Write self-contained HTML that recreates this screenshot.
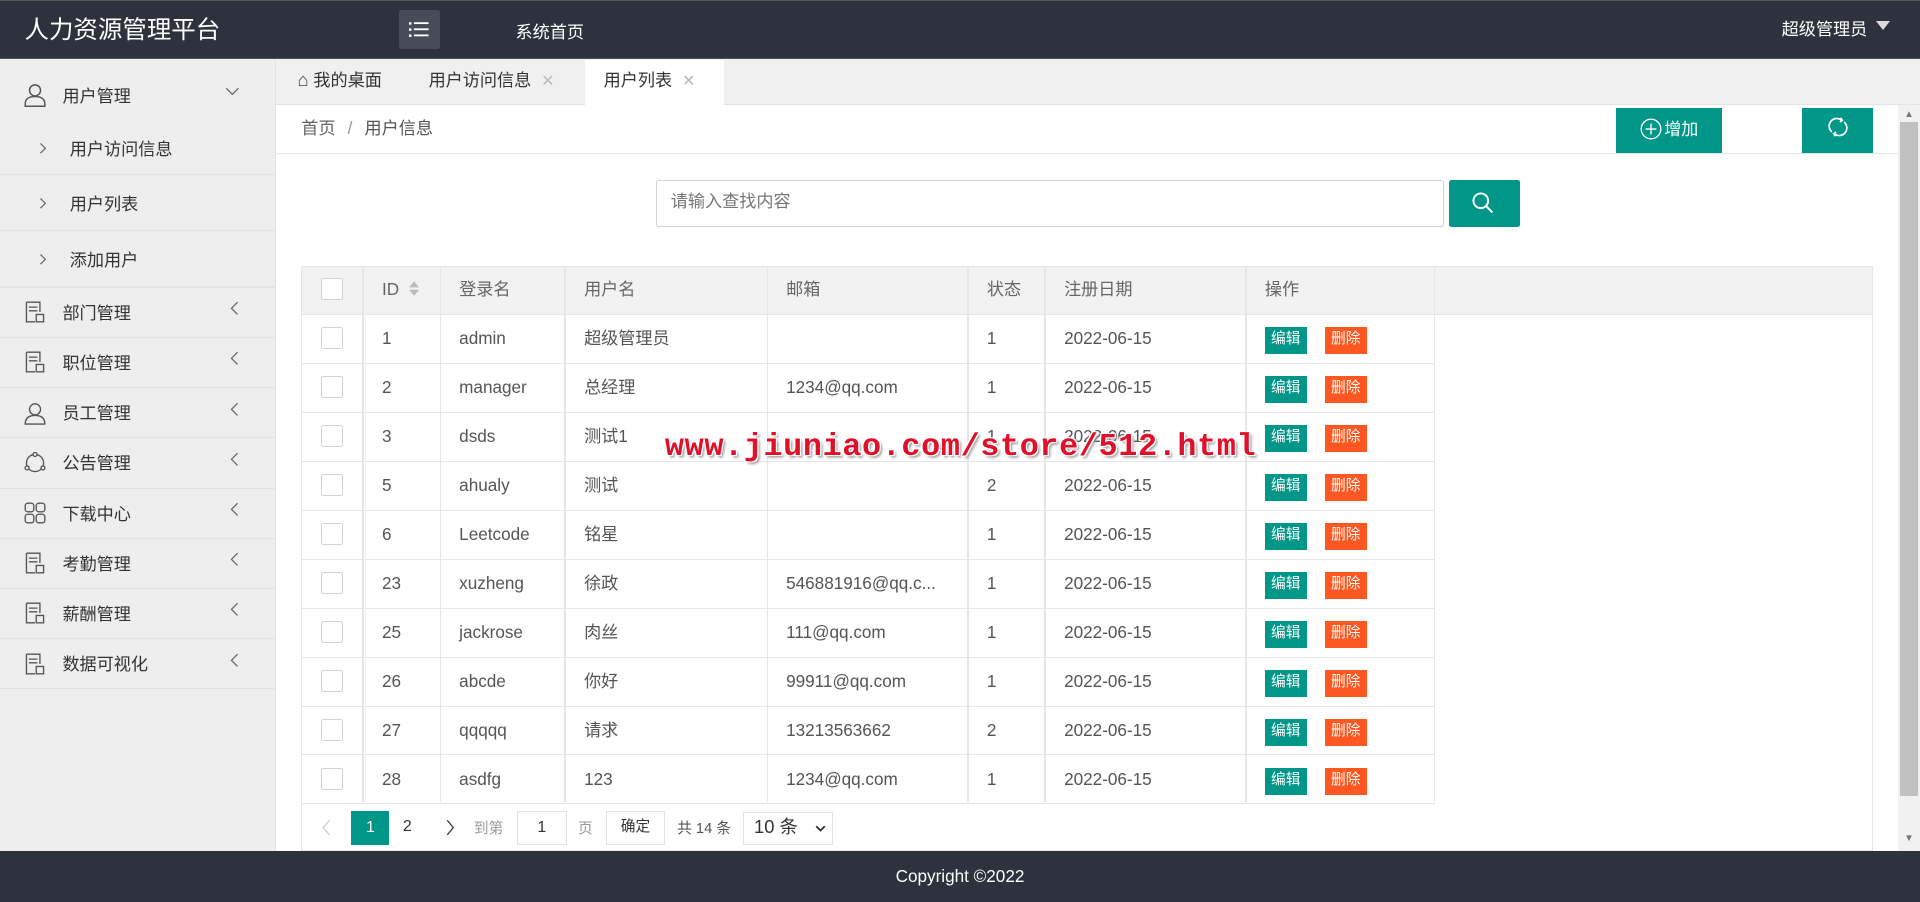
<!DOCTYPE html>
<html><head><meta charset="utf-8">
<style>
*{margin:0;padding:0;box-sizing:border-box}
html,body{width:1920px;height:902px;overflow:hidden;background:#fff}
#w{position:relative;width:1568px;height:737px;zoom:1.22449;font-family:"Liberation Sans","Noto Sans CJK SC",sans-serif;color:#333;font-size:14px}
.a{position:absolute}
.hd{left:0;top:0;width:1568px;height:48px;background:#2e323c;border-top:1px solid #555;border-bottom:1px solid #4a4f5a}
.side{left:0;top:48px;width:225px;height:647px;background:#eeeeee;border-right:1px solid #e2e2e2}
.si{position:absolute;left:0;width:225px;border-bottom:1px solid #e2e2e2;font-size:14px;color:#333}
.tabs{left:225px;top:48px;width:1343px;height:38px;background:#f0f0f0;border-bottom:1px solid #e4e4e4}
.tb{position:absolute;top:0;height:38px;line-height:36px;font-size:14px;color:#333}
.x{color:#bbb;font-size:13px;margin-left:8px}
.btn{background:#009688;color:#fff}
.row{position:absolute;left:246px;width:926px;height:40px;border-bottom:1px solid #e6e6e6}
.c{position:absolute;top:0;height:40px;line-height:38px;font-size:14px;color:#555}
.cb{position:absolute;left:16px;top:10px;width:18px;height:18px;border:1px solid #d2d2d2;background:#fff;border-radius:2px}
.e{position:absolute;top:10px;width:34px;height:22px;line-height:21px;text-align:center;font-size:12px;color:#fff}
.vl{position:absolute;top:217px;width:1px;height:438px;background:#e6e6e6}
.ch{position:absolute;left:31px;width:8px;height:12px}
</style></head><body><div id="w">
<div class="a hd"></div>
<div class="a" style="left:20px;top:9px;color:#fff;font-size:20px">人力资源管理平台</div>
<div class="a" style="left:326px;top:8px;width:33px;height:32px;background:#474c58;border-radius:2px"></div>
<svg class="a" style="left:334px;top:17px" width="17" height="14"><g fill="#fff"><rect x="0" y="1" width="2" height="2"/><rect x="4" y="1" width="12" height="1.5"/><rect x="0" y="6" width="2" height="2"/><rect x="4" y="6" width="12" height="1.5"/><rect x="0" y="11" width="2" height="2"/><rect x="4" y="11" width="12" height="1.5"/></g></svg>
<div class="a" style="left:421px;top:15px;color:#fff;font-size:14px">系统首页</div>
<div class="a" style="left:1455px;top:12px;color:#fff;font-size:14px">超级管理员</div>
<div class="a" style="left:1532px;top:17px;width:0;height:0;border-left:6px solid transparent;border-right:6px solid transparent;border-top:8px solid #ddd"></div>

<div class="a side"></div>
<div class="si" style="top:57px;height:44px;border:0">
<svg class="a" style="left:20px;top:11px" width="18" height="20" fill="none" stroke="#555" stroke-width="1.2"><circle cx="9" cy="6" r="4.5"/><path d="M1 19v-2c0-4 3-6 8-6s8 2 8 6v2z"/></svg>
<span class="a" style="left:51px;top:10px">用户管理</span>
<svg class="a" style="left:184px;top:14px" width="12" height="8" fill="none" stroke="#666"><path d="M1 1l5 5 5-5"/></svg></div>
<div class="si" style="top:100px;height:43px"><svg class="ch" style="top:15px" fill="none" stroke="#666"><path d="M2 2l4 4-4 4"/></svg><span class="a" style="left:57px;top:10px">用户访问信息</span></div>
<div class="si" style="top:143px;height:46px"><svg class="ch" style="top:17px" fill="none" stroke="#666"><path d="M2 2l4 4-4 4"/></svg><span class="a" style="left:57px;top:12px">用户列表</span></div>
<div class="si" style="top:189px;height:46px;border-bottom:2px solid #e2e2e2"><svg class="ch" style="top:17px" fill="none" stroke="#666"><path d="M2 2l4 4-4 4"/></svg><span class="a" style="left:57px;top:12px">添加用户</span></div>
<div id="menu"></div>

<div class="a tabs"></div>
<div class="tb" style="left:243px;top:47px"><span style="font-size:15px;color:#444">⌂</span> 我的桌面</div>
<div class="tb" style="left:350px;top:47px">用户访问信息<span class="x">✕</span></div>
<div class="tb" style="left:478px;top:49px;width:113px;background:#fff;padding-left:15px;height:37px;line-height:33px">用户列表<span class="x">✕</span></div>

<div class="a" style="left:246px;top:93px;font-size:14px;color:#666">首页 <span style="color:#999;margin:0 6px">/</span> <span style="color:#555">用户信息</span></div>
<div class="a btn" style="left:1320px;top:88px;width:86px;height:37px;line-height:35px;text-align:center;font-size:14px"><svg style="vertical-align:-4px;margin-right:2px" width="18" height="18" fill="none" stroke="#fff" stroke-width="1.1"><circle cx="9" cy="9" r="8"/><path d="M9 4.5v9M4.5 9h9"/></svg>增加</div>
<div class="a btn" style="left:1472px;top:88px;width:58px;height:37px"><svg style="position:absolute;left:20px;top:7px" width="18" height="18" fill="none" stroke="#fff" stroke-width="1.4"><path d="M4 13A6 6 0 0 1 12 3.5M14 5A6 6 0 0 1 6 14.5"/><path d="M11 1.5l1.5 2-2 1.5M7 16.5l-1.5-2 2-1.5"/></svg></div>
<div class="a" style="left:225px;top:125px;width:1325px;height:1px;background:#e6e6e6"></div>
<div class="a" style="left:1550px;top:86px;width:18px;height:609px;background:#f1f1f1"></div>
<div class="a" style="left:1552px;top:100px;width:14px;height:550px;background:#c1c1c1"></div>
<div class="a" style="left:1555px;top:89px;font-size:8px;color:#777">▲</div>
<div class="a" style="left:1555px;top:680px;font-size:8px;color:#777">▼</div>

<div class="a" style="left:536px;top:147px;width:643px;height:38px;border:1px solid #d2d2d2;border-radius:2px;line-height:34px;padding-left:11px;color:#777;font-size:14px">请输入查找内容</div>
<div class="a btn" style="left:1183px;top:147px;width:58px;height:38px;border-radius:2px"><svg style="position:absolute;left:18px;top:9px" width="20" height="20" fill="none" stroke="#fff" stroke-width="1.6"><circle cx="8" cy="8" r="6"/><path d="M12.5 12.5l5 5"/></svg></div>

<div class="a" style="left:246px;top:217px;width:1284px;height:478px;border:1px solid #e6e6e6"></div>
<div class="a" style="left:246px;top:217px;width:1284px;height:40px;background:#f2f2f2;border:1px solid #e6e6e6"></div>
<div id="tbl"></div>

<svg class="a" style="left:263px;top:669px" width="8" height="14" fill="none" stroke="#ccc"><path d="M6 1L1 7l5 6"/></svg>
<div class="a" style="left:287px;top:662px;width:31px;height:28px;background:#009688;color:#fff;text-align:center;line-height:28px;font-size:13px">1</div>
<div class="a" style="left:329px;top:668px;font-size:13px">2</div>
<svg class="a" style="left:364px;top:669px" width="8" height="14" fill="none" stroke="#333"><path d="M1 1l5 6-5 6"/></svg>
<div class="a" style="left:387px;top:667px;font-size:12px;color:#999">到第</div>
<div class="a" style="left:422px;top:662px;width:41px;height:28px;border:1px solid #e2e2e2;text-align:center;line-height:26px;font-size:13px">1</div>
<div class="a" style="left:472px;top:667px;font-size:12px;color:#999">页</div>
<div class="a" style="left:495px;top:662px;width:48px;height:28px;border:1px solid #e2e2e2;text-align:center;line-height:25px;font-size:12px">确定</div>
<div class="a" style="left:553px;top:667px;font-size:12px;color:#555">共 14 条</div>
<div class="a" style="left:607px;top:663px;width:73px;height:27px;border:1px solid #e2e2e2;line-height:23px;padding-left:8px;font-size:15px;color:#333">10 条<svg style="position:absolute;left:58px;top:10px" width="9" height="6" fill="none" stroke="#333" stroke-width="1.5"><path d="M1 1l3.5 3.5L8 1"/></svg></div>

<div class="a" style="left:0;top:695px;width:1568px;height:42px;background:#2e323c;color:#fff;text-align:center;line-height:42px;font-size:14px">Copyright ©2022</div>

<div class="a" style="left:543px;top:350px;font-family:'Liberation Mono',monospace;font-weight:bold;font-size:26px;color:#e0102a;letter-spacing:0.5px;text-shadow:1px 1px 0 #fff,-1px -1px 0 #fff,1px -1px 0 #fff,-1px 1px 0 #fff,2px 2px 2px #999">www.jiuniao.com/store/512.html</div>
</div>
<script>
var m=[["部门管理","doc"],["职位管理","doc"],["员工管理","user"],["公告管理","circ"],["下载中心","grid"],["考勤管理","doc"],["薪酬管理","doc"],["数据可视化","doc"]];
var ic={doc:'<path d="M2 1h11v8M2 1v16h7M4 5h7M4 8h7"/><rect x="10" y="11" width="6" height="6"/>',user:'<circle cx="9" cy="6" r="4.5"/><path d="M1 18c0-5 3-7 8-7s8 2 8 7z"/>',circ:'<circle cx="9" cy="9" r="7"/><circle cx="9" cy="2" r="1.6" fill="#eee"/><circle cx="2.5" cy="13" r="1.6" fill="#eee"/><circle cx="15.5" cy="13" r="1.6" fill="#eee"/>',grid:'<rect x="1" y="1" width="7" height="7" rx="2"/><rect x="10" y="1" width="7" height="7" rx="2"/><rect x="1" y="10" width="7" height="7" rx="2"/><rect x="10" y="10" width="7" height="7" rx="2"/>'};
var h='';m.forEach(function(it,i){var t=235+i*41;h+='<div class="si" style="top:'+t+'px;height:41px"><svg class="a" style="left:20px;top:11px" width="18" height="19" fill="none" stroke="#555" stroke-width="1.1">'+ic[it[1]]+'</svg><span class="a" style="left:51px;top:9px">'+it[0]+'</span><svg class="a" style="left:187px;top:11px" width="8" height="12" fill="none" stroke="#666"><path d="M7 1L2 6l5 5"/></svg></div>';});
document.getElementById('menu').innerHTML=h;
var cols=[[296,"ID"],[359,"登录名"],[461,"用户名"],[626,"邮箱"],[790,"状态"],[853,"注册日期"],[1017,"操作"],[1171,""]];
var d=[["1","admin","超级管理员",""],["2","manager","总经理","1234@qq.com"],["3","dsds","测试1",""],["5","ahualy","测试",""],["6","Leetcode","铭星",""],["23","xuzheng","徐政","546881916@qq.c..."],["25","jackrose","肉丝","111@qq.com"],["26","abcde","你好","99911@qq.com"],["27","qqqqq","请求","13213563662"],["28","asdfg","123","1234@qq.com"]];
var s='<div class="row" style="top:217px;border:0"><div class="cb"></div>';
cols.forEach(function(c,i){if(c[1])s+='<div class="c" style="left:'+(c[0]-246+16)+'px;color:#666">'+c[1]+(i==0?' <svg width="10" height="14" style="vertical-align:-2px;margin-left:3px"><path d="M5 1l4 5H1zM5 13l4-5H1z" fill="#bbb"/></svg>':'')+'</div>';});
s+='</div>';
d.forEach(function(r,i){var t=257+i*40;var st=(r[0]=="5"||r[0]=="27")?"2":"1";s+='<div class="row" style="top:'+t+'px"><div class="cb"></div>';
var v=[r[0],r[1],r[2],r[3],st,"2022-06-15"];v.forEach(function(x,j){s+='<div class="c" style="left:'+(cols[j][0]-246+16)+'px">'+x+'</div>';});
s+='<div class="e" style="left:787px;background:#009688">编辑</div><div class="e" style="left:836px;background:#ff5722">删除</div></div>';});
cols.forEach(function(c){s+='<div class="vl" style="left:'+c[0]+'px"></div>';});
s+='<div class="vl" style="left:298px;background:#f0f0f0"></div>';
document.getElementById('tbl').innerHTML=s;
</script>
</body></html>
